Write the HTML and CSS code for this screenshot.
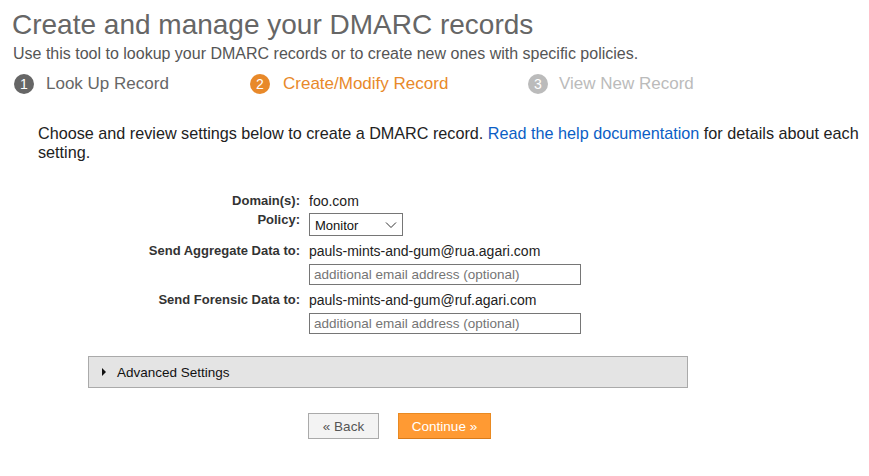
FILE: index.html
```html
<!DOCTYPE html>
<html>
<head>
<meta charset="utf-8">
<link rel="stylesheet" href="styles.css">
</head>
<body>
<div class="page">
  <h1 class="title">Create and manage your DMARC records</h1>
  <p class="subtitle">Use this tool to lookup your DMARC records or to create new ones with specific policies.</p>
  <ol class="steps">
    <li class="step done"><span class="num">1</span>Look Up Record</li>
    <li class="step active"><span class="num">2</span>Create/Modify Record</li>
    <li class="step todo"><span class="num">3</span>View New Record</li>
  </ol>
  <p class="intro">Choose and review settings below to create a DMARC record. <a href="#">Read the help documentation</a> for details about each setting.</p>
  <div class="form">
    <div class="label">Domain(s):</div>
    <div class="value">foo.com</div>
    <div class="label lpolicy">Policy:</div>
    <div class="value"><div class="select"><span>Monitor</span><svg width="12" height="8" viewBox="0 0 12 8"><path d="M1 1.5 L6 6.5 L11 1.5" fill="none" stroke="#333" stroke-width="1"/></svg></div></div>
    <div class="label r-agg">Send Aggregate Data to:</div>
    <div class="value r-agg">pauls-mints-and-gum@rua.agari.com</div>
    <div class="label"></div>
    <div class="value"><input class="email" type="text" placeholder="additional email address (optional)"></div>
    <div class="label r-for">Send Forensic Data to:</div>
    <div class="value r-for">pauls-mints-and-gum@ruf.agari.com</div>
    <div class="label"></div>
    <div class="value"><input class="email" type="text" placeholder="additional email address (optional)"></div>
  </div>
  <div class="advanced"><span class="tri"></span>Advanced Settings</div>
  <div class="buttons">
    <button class="btn back">« Back</button>
    <button class="btn cont">Continue »</button>
  </div>
</div>
</body>
</html>
```
FILE: styles.css
```css
html, body { margin: 0; padding: 0; background: #fff; }
body { font-family: "Liberation Sans", Arial, sans-serif; color: #222; }
.page { padding: 8px 0 0 12px; width: 857px; }
.title { font-size: 28px; font-weight: normal; color: #666; margin: 0; line-height: 34px; }
.subtitle { font-size: 16px; color: #555; margin: 3px 0 0 1px; line-height: 18px; }
.steps { list-style: none; display: flex; margin: 10px 0 0 2px; padding: 0; font-size: 17px; line-height: 22px; }
.step { display: flex; align-items: center; }
.step .num { width: 20px; height: 20px; border-radius: 50%; color: #fff; font-size: 14px; line-height: 20px; text-align: center; margin-right: 12px; }
.step.done { color: #666; width: 236px; }
.step.done .num { background: #666; }
.step.active { color: #e8892a; width: 278px; }
.step.active .num { background: #e8892a; margin-right: 13px; }
.step.todo { color: #bbb; }
.step.todo .num { background: #bbb; margin-right: 11px; }
.intro { font-size: 16.2px; line-height: 19px; margin: 29px 0 0 26px; color: #222; }
.intro a { color: #0b5ec5; text-decoration: none; }
.form { display: grid; grid-template-columns: 288px 300px; column-gap: 9px; margin-top: 31px; }
.label { text-align: right; font-weight: bold; color: #333; line-height: 16px; font-size: 13px; }
.value { color: #222; line-height: 16px; font-size: 14px; }
.lpolicy { margin-top: 3px; }
.select { display: flex; align-items: center; justify-content: space-between; padding: 0 5px; box-sizing: border-box; width: 94px; height: 23px; border: 1px solid #767676; font-size: 13px; color: #111; margin-top: 4px; }
.select span { margin-top: 3px; }
.r-agg { margin-top: 7px; }
.r-for { margin-top: 7px; }
.email { display: block; width: 272px; height: 21px; box-sizing: border-box; border: 1px solid #767676; font-family: "Liberation Sans", Arial, sans-serif; font-size: 13.5px; padding: 0 4px; margin: 5px 0 0; }
.email::placeholder { color: #757575; }
.advanced { margin: 22px 0 0 76px; width: 600px; height: 32px; box-sizing: border-box; background: #e4e4e4; border: 1px solid #aaa; display: flex; align-items: center; font-size: 13.5px; color: #111; padding-left: 13px; }
.tri { width: 0; height: 0; border-top: 4px solid transparent; border-bottom: 4px solid transparent; border-left: 4px solid #111; margin-right: 11px; }
.buttons { display: flex; margin: 25px 0 0 296px; gap: 19px; }
.btn { font-family: "Liberation Sans", Arial, sans-serif; font-size: 13.5px; height: 26px; box-sizing: border-box; padding: 0; }
.back { width: 71px; background: #f3f3f3; border: 1px solid #aaa; color: #555; }
.cont { width: 93px; background: #ff9a33; border: 1px solid #e98a22; border-bottom-color: #d87a1a; color: #fff; }
```
